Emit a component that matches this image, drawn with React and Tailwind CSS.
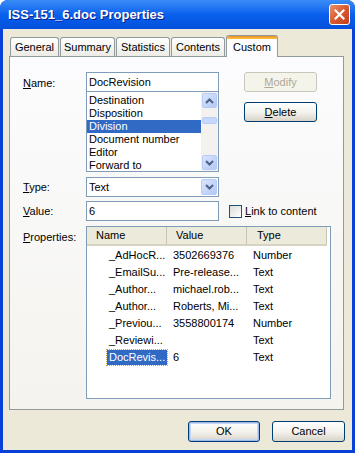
import React from 'react';

const font = "font-['Tahoma','Liberation_Sans',Arial,sans-serif]";

const Btn = ({ children, disabled, isDefault, className = '' }) => (
  <div
    className={`flex items-center justify-center rounded-[3px] border text-[11px] ${
      disabled
        ? 'border-[#c9c7ba] bg-[#f5f4ea] text-[#aca899]'
        : 'border-[#003c74] bg-gradient-to-b from-[#ffffff] via-[#f4f3ee] to-[#d8d4c8] text-black'
    } ${isDefault ? 'shadow-[inset_0_0_0_1px_#9cb9eb,inset_0_0_0_2px_#c6d6f5]' : ''} ${className}`}
  >
    {children}
  </div>
);

const ScrollBtn = ({ dir, className = '' }) => (
  <div
    className={`flex h-[15px] w-[15px] items-center justify-center rounded-[2px] border border-[#b7cbf8] bg-gradient-to-br from-[#dbe6fd] to-[#b4c8f6] ${className}`}
  >
    <svg width="9" height="6" viewBox="0 0 9 6">
      <path
        d={dir === 'up' ? 'M1 5 L4.5 1.5 L8 5' : 'M1 1 L4.5 4.5 L8 1'}
        fill="none"
        stroke="#4d6185"
        strokeWidth="2"
      />
    </svg>
  </div>
);

const U = ({ children }) => <span className="underline underline-offset-1">{children}</span>;

const listItems = ['Destination', 'Disposition', 'Division', 'Document number', 'Editor', 'Forward to'];

const rows = [
  { name: '_AdHocR...', value: '3502669376', type: 'Number' },
  { name: '_EmailSu...', value: 'Pre-release...', type: 'Text' },
  { name: '_Author...', value: 'michael.rob...', type: 'Text' },
  { name: '_Author...', value: 'Roberts, Mi...', type: 'Text' },
  { name: '_Previou...', value: '3558800174', type: 'Number' },
  { name: '_Reviewi...', value: '', type: 'Text' },
  { name: 'DocRevis...', value: '6', type: 'Text', selected: true },
];

const tabs = [
  { label: 'General', w: 'w-[49px]' },
  { label: 'Summary', w: 'w-[55px]' },
  { label: 'Statistics', w: 'w-[54px]' },
  { label: 'Contents', w: 'w-[54px]' },
];

export default function App() {
  return (
    <div className={`${font} flex h-[453px] w-[355px] flex-col overflow-hidden rounded-t-[8px] bg-[#0840d8] text-[11px] text-black`}>
      {/* Title bar */}
      <div className="flex h-[29px] shrink-0 items-center justify-between bg-gradient-to-b from-[#3a8cf8] via-[#0860ec] to-[#0450dc] pl-[8px] pr-[5px]">
        <span className="text-[13px] font-bold text-white [text-shadow:1px_1px_0_#0a1e8c]">
          ISS-151_6.doc Properties
        </span>
        <div className="flex h-[21px] w-[21px] items-center justify-center rounded-[3px] border border-white bg-gradient-to-br from-[#e9906a] via-[#d9582e] to-[#c0401a]">
          <svg width="11" height="11" viewBox="0 0 11 11">
            <path d="M1.5 1.5 L9.5 9.5 M9.5 1.5 L1.5 9.5" stroke="white" strokeWidth="2.2" strokeLinecap="square" />
          </svg>
        </div>
      </div>

      {/* Body */}
      <div className="mx-[3px] mb-[3px] flex flex-1 flex-col bg-[#ece9d8] px-[6px] pt-[6px]">
        {/* Tabs */}
        <div className="flex h-[21px] items-end pl-[1px]">
          {tabs.map((t) => (
            <div
              key={t.label}
              className={`${t.w} mr-px flex h-[19px] items-center justify-center rounded-t-[3px] border border-b-0 border-[#919b9c] bg-gradient-to-b from-[#ffffff] to-[#ecebe5]`}
            >
              {t.label}
            </div>
          ))}
          <div className="relative z-10 -mb-px flex h-[22px] w-[52px] flex-col rounded-t-[3px] border border-b-0 border-[#919b9c] bg-[#fcfcfe]">
            <div className="h-[3px] rounded-t-[2px] bg-gradient-to-b from-[#e68b2c] to-[#ffc73c]" />
            <div className="flex flex-1 items-center justify-center pb-[2px]">Custom</div>
          </div>
        </div>

        {/* Panel */}
        <div className="flex h-[354px] w-[335px] flex-col border border-[#919b9c] bg-gradient-to-b from-[#fcfcfe] to-[#f4f3ee] pl-[13px] pt-[15px]">
          <div className="flex">
            <div className="w-[63px] pt-[3px]">
              <U>N</U>ame:
            </div>
            <div className="flex w-[133px] flex-col">
              <div className="flex h-[20px] items-center border border-[#7f9db9] bg-white pl-[2px]">DocRevision</div>
              <div className="flex h-[80px] border border-t-0 border-[#7f9db9] bg-white">
                <div className="flex flex-1 flex-col pt-[2px]">
                  {listItems.map((it) => (
                    <div
                      key={it}
                      className={`flex h-[13px] items-center pl-[2px] ${it === 'Division' ? 'bg-[#316ac5] text-white' : ''}`}
                    >
                      {it}
                    </div>
                  ))}
                </div>
                <div className="flex w-[17px] flex-col items-center bg-[#f3f2ef] py-[1px]">
                  <ScrollBtn dir="up" />
                  <div className="mt-[9px] h-[7px] w-[15px] rounded-[2px] border border-[#b7cbf8] bg-[#c8d7fb]" />
                  <div className="flex-1" />
                  <ScrollBtn dir="down" />
                </div>
              </div>
            </div>
            <div className="ml-[25px] flex flex-col gap-[10px]">
              <Btn disabled className="h-[20px] w-[73px]">
                <U>M</U>odify
              </Btn>
              <Btn className="h-[20px] w-[73px]">
                <U>D</U>elete
              </Btn>
            </div>
          </div>

          {/* Type */}
          <div className="mt-[5px] flex items-center">
            <div className="w-[63px]">
              <U>T</U>ype:
            </div>
            <div className="flex h-[20px] w-[133px] items-center border border-[#7f9db9] bg-white pl-[2px] pr-px">
              <span className="flex-1">Text</span>
              <ScrollBtn dir="down" className="h-[16px] w-[16px]" />
            </div>
          </div>

          {/* Value */}
          <div className="mt-[4px] flex items-center">
            <div className="w-[63px]">
              <U>V</U>alue:
            </div>
            <div className="flex h-[20px] w-[133px] items-center border border-[#7f9db9] bg-white pl-[2px]">6</div>
            <div className="ml-[10px] h-[13px] w-[13px] border border-[#1c5180] bg-gradient-to-br from-[#dcdcd7] to-[#ffffff]" />
            <span className="ml-[3px]">
              <U>L</U>ink to content
            </span>
          </div>

          {/* Properties */}
          <div className="mt-[5px] flex">
            <div className="w-[63px] pt-[3px]">
              <U>P</U>roperties:
            </div>
            <div className="h-[173px] w-[245px] border border-[#7f9db9] bg-white">
              <div className="flex h-[19px] w-[240px] border-b-2 border-[#d6d3c2] bg-[#ebeadb]">
                <div className="flex w-[80px] items-center border-r border-[#c7c5b2] pl-[9px]">Name</div>
                <div className="flex w-[80px] items-center border-r border-[#c7c5b2] pl-[9px]">Value</div>
                <div className="flex w-[80px] items-center border-r border-[#c7c5b2] pl-[10px]">Type</div>
              </div>
              <div className="flex flex-col pt-[1px]">
                {rows.map((r, i) => (
                  <div key={i} className="flex h-[17px] items-center">
                    <div className="w-[80px] pl-[20px]">
                      <span
                        className={`inline-block px-[2px] leading-[15px] ${
                          r.selected ? 'bg-[#316ac5] text-white outline-1 outline-dotted outline-[#c9a33c]' : ''
                        }`}
                      >
                        {r.name}
                      </span>
                    </div>
                    <div className="w-[80px] pl-[6px]">{r.value}</div>
                    <div className="w-[80px] pl-[6px]">{r.type}</div>
                  </div>
                ))}
              </div>
            </div>
          </div>
        </div>

        {/* Bottom buttons */}
        <div className="mt-[11px] flex justify-end gap-[12px] pr-px">
          <Btn isDefault className="h-[21px] w-[72px]">OK</Btn>
          <Btn className="h-[21px] w-[73px]">Cancel</Btn>
        </div>
      </div>
    </div>
  );
}
